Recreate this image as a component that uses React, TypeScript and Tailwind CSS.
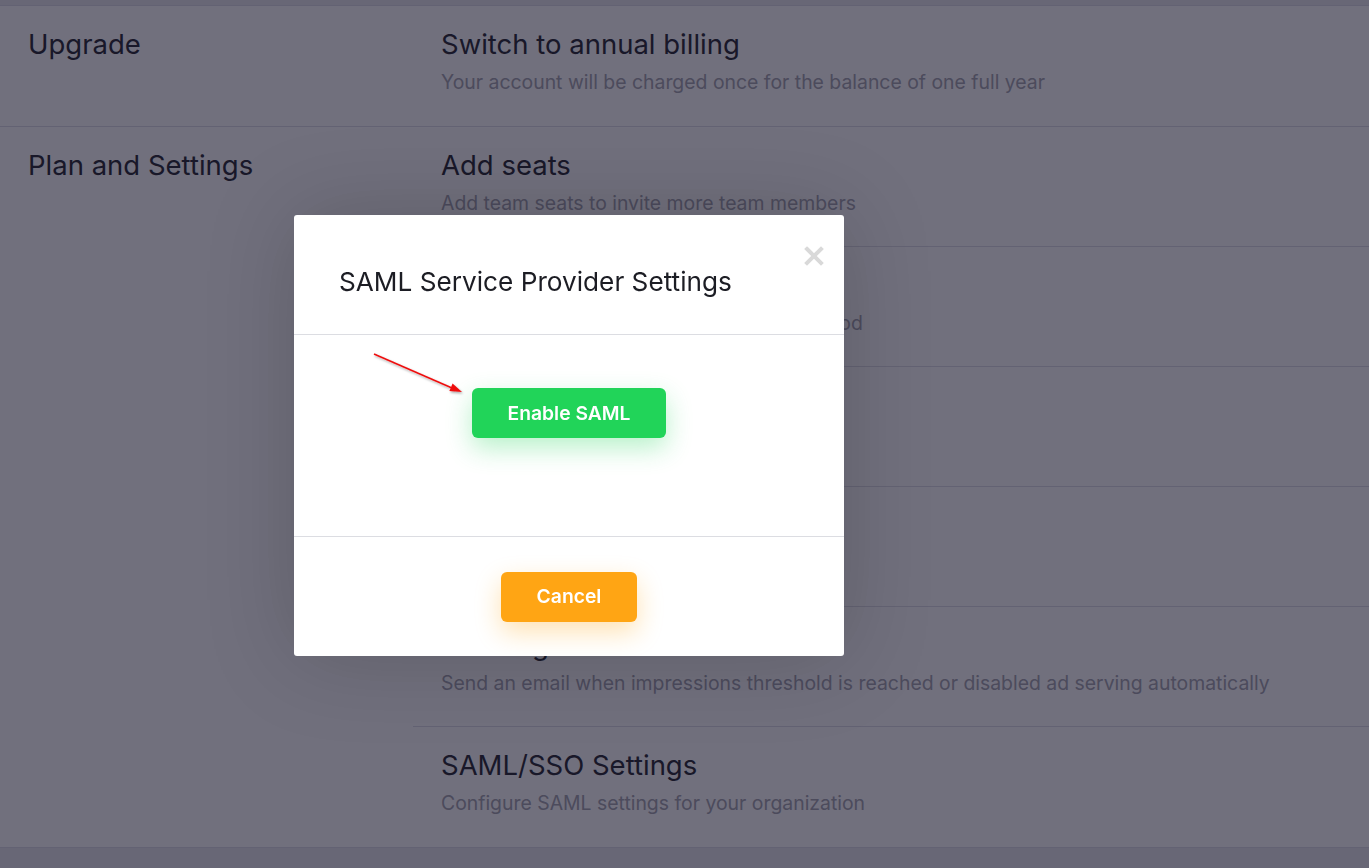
import { X } from 'lucide-react';

interface SettingRow {
  title: string;
  description: string;
}

const planRows: SettingRow[] = [
  { title: 'Add seats', description: 'Add team seats to invite more team members' },
  { title: 'Payment Method', description: 'Change a card used for your payment method' },
  { title: 'Billing History', description: 'View and download your past invoices' },
  { title: 'Team Members', description: 'Manage who has access to your account' },
  {
    title: 'Warning Emails',
    description: 'Send an email when impressions threshold is reached or disabled ad serving automatically',
  },
  { title: 'SAML/SSO Settings', description: 'Configure SAML settings for your organization' },
];

function RowText({ title, description }: SettingRow) {
  return (
    <div className="h-[120px] pt-[22px] pl-[28px]">
      <h3 className="text-[27.5px] leading-8 text-[#2a2b33]">{title}</h3>
      <p className="mt-[8px] text-[19.4px] leading-7 text-[#a5a5b0]">{description}</p>
    </div>
  );
}

function SamlModal() {
  return (
    <div className="relative w-[550px] rounded-[3px] bg-white shadow-[0_0_90px_rgba(0,0,0,0.18)]">
      <div className="h-[120px] border-b border-[#dcdde2] pl-[45px] pt-[51px]">
        <h2 className="text-[26.2px] leading-8 text-[#1c1d24]">SAML Service Provider Settings</h2>
      </div>
      <button className="absolute right-[16px] top-[27px] text-[#d9d9d9]">
        <X size={28} strokeWidth={3.4} strokeLinecap="square" />
      </button>

      <div className="flex h-[202px] justify-center border-b border-[#dcdde2] pt-[53px]">
        <button className="h-[50px] w-[194px] rounded-[6px] bg-[#21d459] text-[19.3px] font-semibold text-white shadow-[0_10px_26px_rgba(33,212,89,0.32)]">
          Enable SAML
        </button>
      </div>

      <div className="flex h-[119px] items-center justify-center">
        <button className="h-[50px] w-[136px] rounded-[6px] bg-[#ffa514] text-[19.3px] font-semibold text-white shadow-[0_10px_26px_rgba(255,165,20,0.32)]">
          Cancel
        </button>
      </div>

      {/* annotation arrow */}
      <svg className="pointer-events-none absolute left-0 top-0" width="550" height="441">
        <defs>
          <filter id="arrowShadow" x="-20%" y="-20%" width="140%" height="140%">
            <feDropShadow dx="1" dy="1.5" stdDeviation="1" floodColor="#000" floodOpacity="0.35" />
          </filter>
        </defs>
        <g filter="url(#arrowShadow)">
          <line x1="80" y1="139" x2="158" y2="173" stroke="#ee1111" strokeWidth="1.6" />
          <polygon points="168,177 155.4,175.9 158.6,168.5" fill="#ee1111" />
        </g>
      </svg>
    </div>
  );
}

export default function App() {
  return (
    <div className="relative min-h-[868px] bg-[#e8e9ef] pt-[5px] font-['Inter',sans-serif]">
      <div className="border-y border-[#dedee6] bg-white">
        <div className="flex border-b border-[#dedee6]">
          <div className="w-[413px] shrink-0 pl-[28px] pt-[22px]">
            <h3 className="text-[27.5px] leading-8 text-[#2a2b33]">Upgrade</h3>
          </div>
          <div className="flex-1">
            <div className="h-[120px] pt-[22px] pl-[28px]">
              <h3 className="text-[27.5px] leading-8 text-[#2a2b33]">Switch to annual billing</h3>
              <p className="mt-[8px] text-[19.4px] leading-7 text-[#a5a5b0]">
                Your account will be charged once for the balance of one full year
              </p>
            </div>
          </div>
        </div>
        <div className="flex">
          <div className="w-[413px] shrink-0 pl-[28px] pt-[22px]">
            <h3 className="text-[27.5px] leading-8 text-[#2a2b33]">Plan and Settings</h3>
          </div>
          <div className="flex-1 divide-y divide-[#dedee6]">
            {planRows.map((row) => (
              <RowText key={row.title} title={row.title} description={row.description} />
            ))}
          </div>
        </div>
      </div>

      <div className="fixed inset-0 bg-[#0e0c22]/[0.59]">
        <div className="pl-[294px] pt-[215px]">
          <SamlModal />
        </div>
      </div>
    </div>
  );
}
